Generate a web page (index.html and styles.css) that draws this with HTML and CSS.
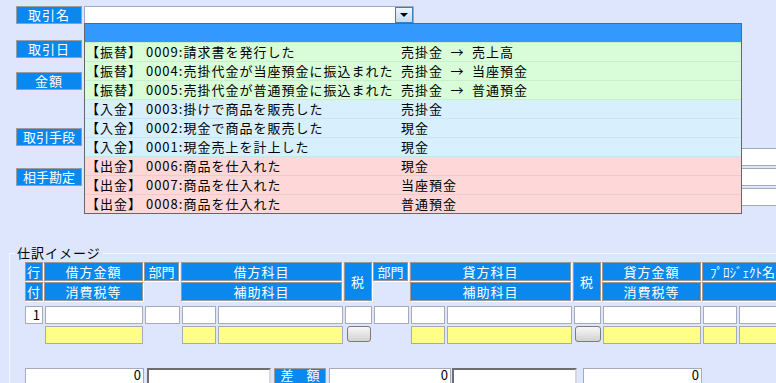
FILE: index.html
```html
<!DOCTYPE html>
<html lang="ja">
<head>
    <meta charset="UTF-8">
    <meta name="viewport" content="width=device-width, initial-scale=1.0">
    <title>仕訳入力</title>
    <link rel="stylesheet" href="styles.css">
</head>
<body>
    <div class="top">
        <div class="labels">
            <div class="label">取引名</div>
            <div class="label l-date">取引日</div>
            <div class="label l-amount">金額</div>
            <div class="label l-means">取引手段</div>
            <div class="label l-partner">相手勘定</div>
        </div>

        <div class="fields">
            <div class="combo">
                <div class="combo-box">
                    <span class="combo-btn">
                        <svg width="8" height="4" viewBox="0 0 8 4"><path d="M0 0h8L4 4z" fill="#000"/></svg>
                    </span>
                </div>
                <!-- 取引名の候補リスト（開いた状態） -->
                <div class="combo-list">
                    <div class="opt selected"></div>
                    <div class="opt transfer"><span>【振替】 0009:請求書を発行した</span><span>売掛金&ensp;→&ensp;売上高</span></div>
                    <div class="opt transfer"><span>【振替】 0004:売掛代金が当座預金に振込まれた</span><span>売掛金&ensp;→&ensp;当座預金</span></div>
                    <div class="opt transfer"><span>【振替】 0005:売掛代金が普通預金に振込まれた</span><span>売掛金&ensp;→&ensp;普通預金</span></div>
                    <div class="opt deposit"><span>【入金】 0003:掛けで商品を販売した</span><span>売掛金</span></div>
                    <div class="opt deposit"><span>【入金】 0002:現金で商品を販売した</span><span>現金</span></div>
                    <div class="opt deposit"><span>【入金】 0001:現金売上を計上した</span><span>現金</span></div>
                    <div class="opt payment"><span>【出金】 0006:商品を仕入れた</span><span>現金</span></div>
                    <div class="opt payment"><span>【出金】 0007:商品を仕入れた</span><span>当座預金</span></div>
                    <div class="opt payment"><span>【出金】 0008:商品を仕入れた</span><span>普通預金</span></div>
                </div>
            </div>
            <div class="side-fields">
                <div class="field"></div>
                <div class="field"></div>
                <div class="field"></div>
            </div>
        </div>
    </div>

    <fieldset class="journal">
        <legend>仕訳イメージ</legend>

        <div class="grid head">
            <div class="h">行</div>
            <div class="h">借方金額</div>
            <div class="h h-dept">部門</div>
            <div class="h wide">借方科目</div>
            <div class="h tax">税</div>
            <div class="h h-dept">部門</div>
            <div class="h wide">貸方科目</div>
            <div class="h tax">税</div>
            <div class="h">貸方金額</div>
            <div class="h wide proj">ﾌﾟﾛｼﾞｪｸﾄ名</div>

            <div class="h">付</div>
            <div class="h">消費税等</div>
            <span></span>
            <div class="h wide">補助科目</div>
            <span></span>
            <div class="h wide">補助科目</div>
            <div class="h">消費税等</div>
            <div class="h wide"></div>
        </div>

        <div class="grid body">
            <div class="in row-no">1</div>
            <div class="in"></div>
            <div class="in"></div>
            <div class="in"></div>
            <div class="in"></div>
            <div class="in"></div>
            <div class="in"></div>
            <div class="in"></div>
            <div class="in"></div>
            <div class="in"></div>
            <div class="in"></div>
            <div class="in"></div>
            <div class="in"></div>

            <span></span>
            <div class="in yellow"></div>
            <span></span>
            <div class="in yellow"></div>
            <div class="in yellow"></div>
            <div class="btn btn-left"></div>
            <span></span>
            <div class="in yellow"></div>
            <div class="in yellow"></div>
            <div class="btn"></div>
            <div class="in yellow"></div>
            <div class="in yellow"></div>
            <div class="in yellow"></div>
        </div>

        <div class="totals">
            <div class="in num t-debit">0</div>
            <div class="in sunken t-memo1"></div>
            <div class="label t-diff">差　額</div>
            <div class="in num t-diffval">0</div>
            <div class="in sunken t-memo2"></div>
            <div class="in num t-credit">0</div>
        </div>
    </fieldset>
</body>
</html>
```

FILE: styles.css
```css
body {
    margin: 0;
    width: 776px;
    height: 383px;
    overflow: hidden;
    background: #dde6fd;
    font-family: "Noto Sans CJK JP", "Noto Sans", sans-serif;
    font-size: 13px;
    letter-spacing: 1px;
    color: #000;
}

.top {
    display: flex;
    height: 245px;
    box-sizing: border-box;
    padding: 6px 0 0 16px;
}

.labels {
    width: 66px;
    display: flex;
    flex-direction: column;
}

.label {
    height: 18px;
    box-sizing: border-box;
    border: 1px solid #9c9c9c;
    background: #0a88ee;
    color: #fff;
    text-align: center;
    line-height: 16px;
    white-space: nowrap;
}

.l-date { margin-top: 16px; }
.l-amount { margin-top: 14px; }
.l-means { margin-top: 38px; letter-spacing: 0; }
.l-partner { margin-top: 22px; letter-spacing: 0; }

.fields {
    flex: 1;
    min-width: 0;
    margin-left: 2px;
    display: flex;
    flex-direction: column;
}

.combo {
    position: relative;
    width: 330px;
    height: 18px;
}

.combo-box {
    height: 18px;
    box-sizing: border-box;
    border: 1px solid #a4abb8;
    background: #fff;
    display: flex;
    justify-content: flex-end;
}

.combo-btn {
    width: 18px;
    height: 16px;
    box-sizing: border-box;
    border: 1px solid #3d7fbc;
    background: linear-gradient(180deg, #eef5fc, #c6dcf1);
    display: flex;
    align-items: center;
    justify-content: center;
}

.combo-list {
    position: absolute;
    top: 17px;
    left: 0;
    width: 658px;
    box-sizing: border-box;
    border: 1px solid #666;
    background: #fff;
    z-index: 2;
}

.opt {
    display: grid;
    grid-template-columns: 315px 1fr;
    height: 19px;
    box-sizing: border-box;
    padding-left: 1px;
    border-bottom: 1px solid;
    line-height: 18px;
    white-space: nowrap;
}

.opt:last-child {
    height: 18px;
    border-bottom: 0;
}

.opt.selected {
    background: #3399ff;
    border-bottom-color: #c6edc6;
}

.opt.transfer {
    background: #d8fdd8;
    border-bottom-color: #c9f1c9;
}

.opt.deposit {
    background: #d8effd;
    border-bottom-color: #c8e5f7;
}

.opt.payment {
    background: #fed8d8;
    border-bottom-color: #f6c9c9;
}

.side-fields {
    margin: 124px 0 0 500px;
    width: 300px;
    display: flex;
    flex-direction: column;
    gap: 2px;
}

.field {
    height: 18px;
    box-sizing: border-box;
    border: 1px solid #a4abb8;
    background: #fff;
}

/* 仕訳イメージ */
.journal {
    width: 860px;
    margin: 0 0 0 9px;
    padding: 1px 0 0 15px;
    border: 1px solid #f5f7fe;
    min-width: 0;
}

.journal legend {
    margin-left: -10px;
    padding: 0 2px;
    line-height: 16px;
}

.grid {
    display: grid;
    grid-template-columns: 19px 100px 37px 36px 127px 29px 37px 36px 127px 29px 100px 36px 102px;
}

.head {
    grid-template-rows: 20px 20px;
}

.h {
    height: 19px;
    box-sizing: border-box;
    margin-right: 1px;
    border: 1px solid #9a9a9a;
    background: #0a88ee;
    color: #fff;
    text-align: center;
    line-height: 17px;
    white-space: nowrap;
    overflow: hidden;
    box-shadow: 1px 1px 0 #fff;
}

.h-dept {
    margin-right: 2px;
    letter-spacing: 0;
}

.h.wide {
    grid-column: span 2;
    margin-right: 2px;
}

.h.tax {
    grid-row: span 2;
    height: 39px;
    line-height: 37px;
}

.h.proj {
    text-align: left;
    padding-left: 7px;
    letter-spacing: 0;
}

.body {
    margin-top: 4px;
    grid-template-rows: 18px 18px;
    row-gap: 2px;
}

.in {
    height: 18px;
    box-sizing: border-box;
    margin: 0 1px;
    border: 1px solid #a7abb7;
    background: #fff;
    line-height: 16px;
    letter-spacing: 0;
}

.in.row-no {
    margin: 0 1px 0 0;
    text-align: right;
    padding-right: 2px;
}

.in.yellow {
    background: #ffff88;
}

.btn {
    height: 16px;
    box-sizing: border-box;
    margin: 0 1px 0 2px;
    border: 1px solid #7b7b7b;
    border-radius: 3px;
    background: linear-gradient(180deg, #f7f7f7, #d2d2d2);
}

.btn-left {
    margin: 0 2px 0 3px;
}

.totals {
    display: flex;
    margin-top: 24px;
    align-items: flex-start;
}

.totals .in,
.totals .label {
    margin: 0;
    line-height: 12px;
}

.num {
    text-align: right;
    padding-right: 2px;
}

.sunken {
    border: 2px solid;
    border-color: #6e6e6e #d8d8d8 #d8d8d8 #6e6e6e;
}

.t-debit { width: 119px; }
.totals .t-memo1 { width: 124px; margin-left: 3px; }
.totals .t-diff { width: 52px; margin-left: 3px; letter-spacing: 0; }
.totals .t-diffval { width: 122px; margin-left: 3px; }
.totals .t-memo2 { width: 125px; margin-left: 1px; }
.totals .t-credit { width: 119px; margin-left: 6px; }
```
